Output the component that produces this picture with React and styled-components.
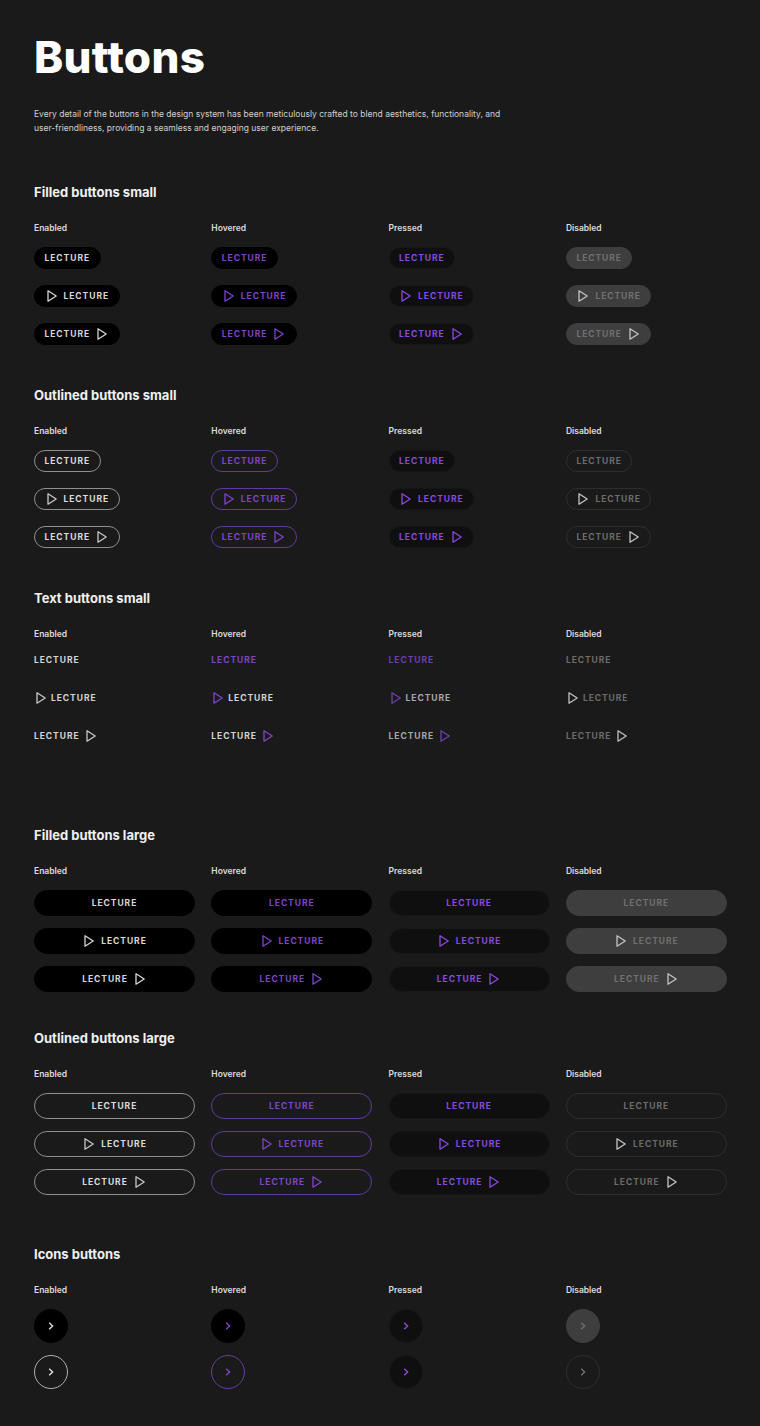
import React from 'react';
import styled, { createGlobalStyle, css } from 'styled-components';

const GlobalStyle = createGlobalStyle`
html, body {
    margin: 0;
    padding: 0;
    background: #1a1a1a;
}
`

const Page = styled.div`
box-sizing: border-box;
width: 760px;
min-height: 1426px;
padding: 32px 33px 37px 34px;
background: #1a1a1a;
color: #ffffff;
font-family: Inter, "Liberation Sans", sans-serif;
`

const Title = styled.h1`
margin: 0;
font-size: 44px;
line-height: 50px;
font-weight: 800;
letter-spacing: 0.3px;
`

const Intro = styled.p`
margin: 25px 0 0;
width: 470px;
font-size: 8.5px;
line-height: 14px;
color: #d0d0d0;
`

const Section = styled.section`
margin-top: ${(p) => p.$top}px;
`

const Heading = styled.h2`
margin: 0;
font-size: 13px;
line-height: 16px;
font-weight: 700;
color: #f0f0f0;
`

const Grid = styled.div`
display: grid;
grid-template-columns: repeat(4, 161px);
column-gap: 16.3px;
margin-top: 22px;
`

const Column = styled.div`
display: flex;
flex-direction: column;
align-items: flex-start;
`

const StateLabel = styled.div`
font-size: 8.5px;
line-height: 12px;
font-weight: 600;
color: #dcdcdc;
margin-bottom: 13px;
`

const Stack = styled.div`
display: flex;
flex-direction: column;
align-items: flex-start;
align-self: stretch;
gap: ${(p) => p.$gap}px;
`

const palette = {
    filled: {
        enabled: { bg: '#000000', border: '#000000', text: '#d8d8d8', icon: '#d8d8d8' },
        hovered: { bg: '#000000', border: '#000000', text: '#7f45c9', icon: '#7f45c9' },
        pressed: { bg: '#0f0f0f', border: '#171717', text: '#8a4ae0', icon: '#8a4ae0' },
        disabled: { bg: '#3e3e3e', border: '#3e3e3e', text: '#707070', icon: '#c4c4c4' },
    },
    outlined: {
        enabled: { bg: 'transparent', border: '#8f8f8f', text: '#dcdcdc', icon: '#c8c8c8' },
        hovered: { bg: 'transparent', border: '#62389c', text: '#7f45c9', icon: '#7f45c9' },
        pressed: { bg: '#0f0f0f', border: '#151515', text: '#8a4ae0', icon: '#8a4ae0' },
        disabled: { bg: 'transparent', border: '#2e2e2e', text: '#6c6c6c', icon: '#c4c4c4' },
    },
    text: {
        enabled: { text: '#d4d4d4', icon: '#c8c8c8' },
        hovered: { text: '#7f45c9', icon: '#7f45c9', mixedText: '#d4d4d4' },
        pressed: { text: '#6e3fae', icon: '#6e3fae', mixedText: '#a8a8a8' },
        disabled: { text: '#6c6c6c', icon: '#c0c0c0', mixedText: '#6c6c6c' },
    },
}

const Button = styled.div`
box-sizing: border-box;
display: flex;
align-items: center;
justify-content: center;
border-radius: 14px;
font-family: Inter, "Liberation Sans", sans-serif;
font-size: 8.5px;
font-weight: 700;
letter-spacing: 0.95px;
line-height: 10px;
${(p) => {
        const c = palette[p.$kind][p.$state]
        if (p.$kind === 'text') {
            return css`
                height: 14px;
                gap: ${p.$icon === 'left' ? 3 : 4}px;
                color: ${p.$icon && c.mixedText ? c.mixedText : c.text};
            `
        }
        return css`
            height: ${p.$large ? 26 : 22}px;
            width: ${p.$large ? '161px' : 'auto'};
            padding: ${p.$large ? '0' : '0 9.5px'};
            gap: 5px;
            color: ${c.text};
            background: ${c.bg};
            border: 1px solid ${c.border};
        `
    }}
`

const Round = styled.div`
box-sizing: border-box;
display: flex;
align-items: center;
justify-content: center;
width: 34px;
height: 34px;
border-radius: 50%;
background: ${(p) => p.$bg};
border: 1px solid ${(p) => p.$border};
color: ${(p) => p.$icon};
`

const IconBox = styled.svg`
display: block;
flex: none;
width: 14px;
height: 14px;
`

const Chevron = styled.svg`
display: block;
width: 10px;
height: 10px;
`

const Play = ({ color }) => (
    <IconBox viewBox="0 0 14 14" fill="none">
        <path d="M3 1.8v10.4L11.2 7z" stroke={color} strokeWidth="1.3" strokeLinejoin="round" />
    </IconBox>
)

const Arrow = () => (
    <Chevron viewBox="0 0 10 10" fill="none">
        <path d="M3.2 1.8 6.6 5 3.2 8.2" stroke="currentColor" strokeWidth="1.4" />
    </Chevron>
)

const STATES = [
    ['enabled', 'Enabled'],
    ['hovered', 'Hovered'],
    ['pressed', 'Pressed'],
    ['disabled', 'Disabled'],
]

const ButtonSet = ({ kind, state, large }) => {
    const c = palette[kind][state]
    return (
        <>
            <Button $kind={kind} $state={state} $large={large}>LECTURE</Button>
            <Button $kind={kind} $state={state} $large={large} $icon="left">
                <Play color={c.icon} />
                LECTURE
            </Button>
            <Button $kind={kind} $state={state} $large={large} $icon="right">
                LECTURE
                <Play color={c.icon} />
            </Button>
        </>
    )
}

const ButtonSection = ({ title, top, kind, large }) => (
    <Section $top={top}>
        <Heading>{title}</Heading>
        <Grid>
            {STATES.map(([state, label]) => (
                <Column key={state}>
                    <StateLabel>{label}</StateLabel>
                    <Stack $gap={kind === 'text' ? 24 : large ? 12 : 16}>
                        <ButtonSet kind={kind} state={state} large={large} />
                    </Stack>
                </Column>
            ))}
        </Grid>
    </Section>
)

const roundStyles = {
    enabled: [{ bg: '#000000', border: '#000000', icon: '#e0e0e0' }, { bg: 'transparent', border: '#b0b0b0', icon: '#e0e0e0' }],
    hovered: [{ bg: '#000000', border: '#000000', icon: '#7f45c9' }, { bg: 'transparent', border: '#6a3ca6', icon: '#7f45c9' }],
    pressed: [{ bg: '#0f0f0f', border: '#171717', icon: '#8a4ae0' }, { bg: '#0f0f0f', border: '#171717', icon: '#8a4ae0' }],
    disabled: [{ bg: '#3e3e3e', border: '#3e3e3e', icon: '#707070' }, { bg: 'transparent', border: '#2e2e2e', icon: '#707070' }],
}

const App = () => (
    <Page>
        <GlobalStyle />
        <Title>Buttons</Title>
        <Intro>
            Every detail of the buttons in the design system has been meticulously crafted to blend aesthetics, functionality, and user-friendliness, providing a seamless and engaging user experience.
        </Intro>
        <ButtonSection title="Filled buttons small" top={49} kind="filled" />
        <ButtonSection title="Outlined buttons small" top={42} kind="outlined" />
        <ButtonSection title="Text buttons small" top={42} kind="text" />
        <ButtonSection title="Filled buttons large" top={84} kind="filled" large />
        <ButtonSection title="Outlined buttons large" top={38} kind="outlined" large />
        <Section $top={51}>
            <Heading>Icons buttons</Heading>
            <Grid>
                {STATES.map(([state, label]) => (
                    <Column key={state}>
                        <StateLabel>{label}</StateLabel>
                        <Stack $gap={12}>
                            {roundStyles[state].map((r, i) => (
                                <Round key={i} $bg={r.bg} $border={r.border} $icon={r.icon}>
                                    <Arrow />
                                </Round>
                            ))}
                        </Stack>
                    </Column>
                ))}
            </Grid>
        </Section>
    </Page>
)

export default App
